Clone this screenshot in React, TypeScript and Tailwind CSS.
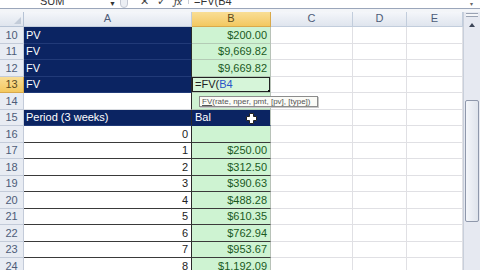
import { FC } from "react";
import { twMerge } from "tailwind-merge";

type Kind = "navy" | "plain" | "blank" | "edit";

interface Row {
  n: number;
  a: string;
  b: string;
  kind: Kind;
}

const rows: Row[] = [
  { n: 10, a: "PV", b: "$200.00", kind: "navy" },
  { n: 11, a: "FV", b: "$9,669.82", kind: "navy" },
  { n: 12, a: "FV", b: "$9,669.82", kind: "navy" },
  { n: 13, a: "FV", b: "", kind: "edit" },
  { n: 14, a: "", b: "", kind: "blank" },
  { n: 15, a: "Period (3 weeks)", b: "Bal", kind: "navy" },
  { n: 16, a: "0", b: "", kind: "plain" },
  { n: 17, a: "1", b: "$250.00", kind: "plain" },
  { n: 18, a: "2", b: "$312.50", kind: "plain" },
  { n: 19, a: "3", b: "$390.63", kind: "plain" },
  { n: 20, a: "4", b: "$488.28", kind: "plain" },
  { n: 21, a: "5", b: "$610.35", kind: "plain" },
  { n: 22, a: "6", b: "$762.94", kind: "plain" },
  { n: 23, a: "7", b: "$953.67", kind: "plain" },
  { n: 24, a: "8", b: "$1,192.09", kind: "plain" },
];

const cell = "h-[16.5px] flex items-end pb-[1px] text-[11px] leading-[13px] overflow-hidden";

const FormulaBar: FC = () => (
  <div className="h-[9px] flex items-start overflow-hidden bg-white border-b border-[#9ba6ba] text-[11px] leading-[11px] text-[#333]">
    <div className="w-[120px] flex items-start -mt-[4px]">
      <span className="ml-[40px]">SUM</span>
      <span className="ml-auto mr-[4px] text-[7px] mt-[2px]">▼</span>
    </div>
    <div className="w-[8px] h-[12px] -mt-[4px] rounded-full border border-[#c3c8d3] bg-[#eceff4]" />
    <div className="w-[60px] flex items-start gap-[8px] -mt-[4px] pl-[12px] text-[#444]">
      <span>✕</span>
      <span>✓</span>
      <span className="italic font-serif">fx</span>
    </div>
    <div className="flex-1 h-full border-l border-[#c8ccd4] pl-[5px] -mt-[4px]">=FV(B4</div>
    <div className="w-[17px] h-full flex justify-center">
      <span className="text-[6px] text-[#666] -mt-[1px]">▾</span>
    </div>
  </div>
);

const ColumnHeaders: FC = () => (
  <div className="grid grid-cols-[24px_168px_79px_82px_54px_56px] h-[15.5px] text-[11px] leading-[13px] text-[#4d5c78]">
    <div className="bg-gradient-to-b from-[#f3f5f9] to-[#dfe5ee] border-r border-b border-[#b6c3d5] flex items-end justify-end pr-[2px] pb-[2px]">
      <div className="w-0 h-0 border-l-[7px] border-l-transparent border-b-[7px] border-b-[#c3ccd9]" />
    </div>
    {["A", "B", "C", "D", "E"].map((c) => (
      <div
        key={c}
        className={twMerge(
          "flex items-center justify-center border-r border-b",
          c === "B"
            ? "bg-gradient-to-b from-[#f9de95] to-[#f3c85f] border-[#d9a94a] text-[#5b4a20]"
            : "bg-gradient-to-b from-[#f4f6fa] to-[#dfe5ee] border-[#c2cddc]"
        )}
      >
        {c}
      </div>
    ))}
  </div>
);

const SheetRow: FC<{ row: Row }> = ({ row }) => {
  const navy = row.kind === "navy";
  const plain = row.kind === "plain";
  return (
    <div className="grid grid-cols-[24px_168px_79px_82px_54px_56px]">
      <div
        className={twMerge(
          cell,
          "justify-center border-r border-b text-[#4d5c78]",
          row.n === 13
            ? "bg-gradient-to-b from-[#f9de95] to-[#f3c85f] border-[#d9a94a] text-[#5b4a20]"
            : "bg-[#e8ecf3] border-[#c3cbd9]"
        )}
      >
        {row.n}
      </div>
      <div
        className={twMerge(
          cell,
          "pl-[2px] pr-[3px] border-r border-r-[#2a2a2a]",
          navy || row.kind === "edit"
            ? "bg-[#0b2462] text-white border-b border-b-[#213a78]"
            : "",
          row.kind === "blank" ? "bg-white border-b border-b-[#d8dbe0]" : "",
          plain ? "bg-white text-[#222] justify-end border-b border-b-[#3a3a3a]" : ""
        )}
      >
        {row.a}
      </div>
      <div
        className={twMerge(
          cell,
          "relative px-[3px] border-r border-r-[#b8c2b8]",
          row.n === 15 ? "bg-[#0b2462] text-white border-b border-b-[#0b2462]" : "",
          row.n >= 10 && row.n <= 12
            ? "bg-[#cef3d2] text-[#1a5a1e] justify-end border-b border-b-[#b3cbb5]"
            : "",
          row.kind === "blank" ? "bg-[#cef3d2] border-b border-b-[#b3cbb5]" : "",
          plain ? "bg-[#cef3d2] text-[#1a5a1e] justify-end border-b border-b-[#3a3a3a]" : "",
          row.kind === "edit" ? "bg-[#d6f5d9] text-[#222] border-b border-b-[#b3cbb5]" : ""
        )}
      >
        {row.kind === "edit" ? (
          <>
            <span>
              =FV(<span className="text-[#2a55c8]">B4</span>
            </span>
            <div className="absolute inset-0 border border-[#222]" />
            <div className="absolute right-[-2px] bottom-[-2px] w-[4px] h-[4px] bg-[#111] z-10" />
          </>
        ) : (
          row.b
        )}
      </div>
      <div className={twMerge(cell, "bg-white border-r border-b border-[#e0e0e4]")} />
      <div className={twMerge(cell, "bg-white border-r border-b border-[#e0e0e4]")} />
      <div className={twMerge(cell, "bg-white border-r border-b border-[#e0e0e4]")} />
    </div>
  );
};

const Scrollbar: FC = () => (
  <div className="w-[17px] flex flex-col bg-[#e6e9f1] border-l border-[#c8cfdb]">
    <div className="h-[4px] mx-[2px] mt-[1px] border-y border-[#9aa3b3] bg-[#f5f6f8]" />
    <div className="h-[12px] mt-[2px] flex items-center justify-center">
      <div className="w-0 h-0 border-l-[3px] border-l-transparent border-r-[3px] border-r-transparent border-b-[4px] border-b-[#3d4658]" />
    </div>
    <div className="h-[69px]" />
    <div className="h-[122px] mx-[1px] rounded-[2px] border border-[#8f98ab] bg-gradient-to-r from-[#f4f6fa] to-[#dfe4ec]" />
    <div className="flex-1" />
  </div>
);

const App: FC = () => {
  return (
    <div
      className="w-[480px] h-[270px] overflow-hidden bg-white relative"
      style={{ fontFamily: '"Liberation Sans", Arial, sans-serif' }}
    >
      <FormulaBar />
      <div className="h-[2.5px] bg-[#f3f5f8]" />
      <div className="flex">
        <div className="w-[463px]">
          <ColumnHeaders />
          {rows.map((row) => (
            <SheetRow key={row.n} row={row} />
          ))}
        </div>
        <Scrollbar />
      </div>

      {/* function tooltip */}
      <div className="absolute left-[199px] top-[96px] h-[11px] w-[119px] px-[2px] bg-[#fbfbf7] border border-[#8c8c8c] text-[8px] leading-[9px] text-[#555] whitespace-nowrap shadow-[1px_1px_0_#c8c8c8]">
        <span className="underline">FV</span>(rate, nper, pmt, [pv], [type])
      </div>

      {/* plus cursor */}
      <svg className="absolute left-[246px] top-[113px]" width="11" height="11" viewBox="0 0 11 11">
        <path
          d="M3.5 0.5h4v3h3v4h-3v3h-4v-3h-3v-4h3z"
          fill="#fff"
          stroke="#222"
          strokeWidth="1"
        />
      </svg>
    </div>
  );
};

export default App;
